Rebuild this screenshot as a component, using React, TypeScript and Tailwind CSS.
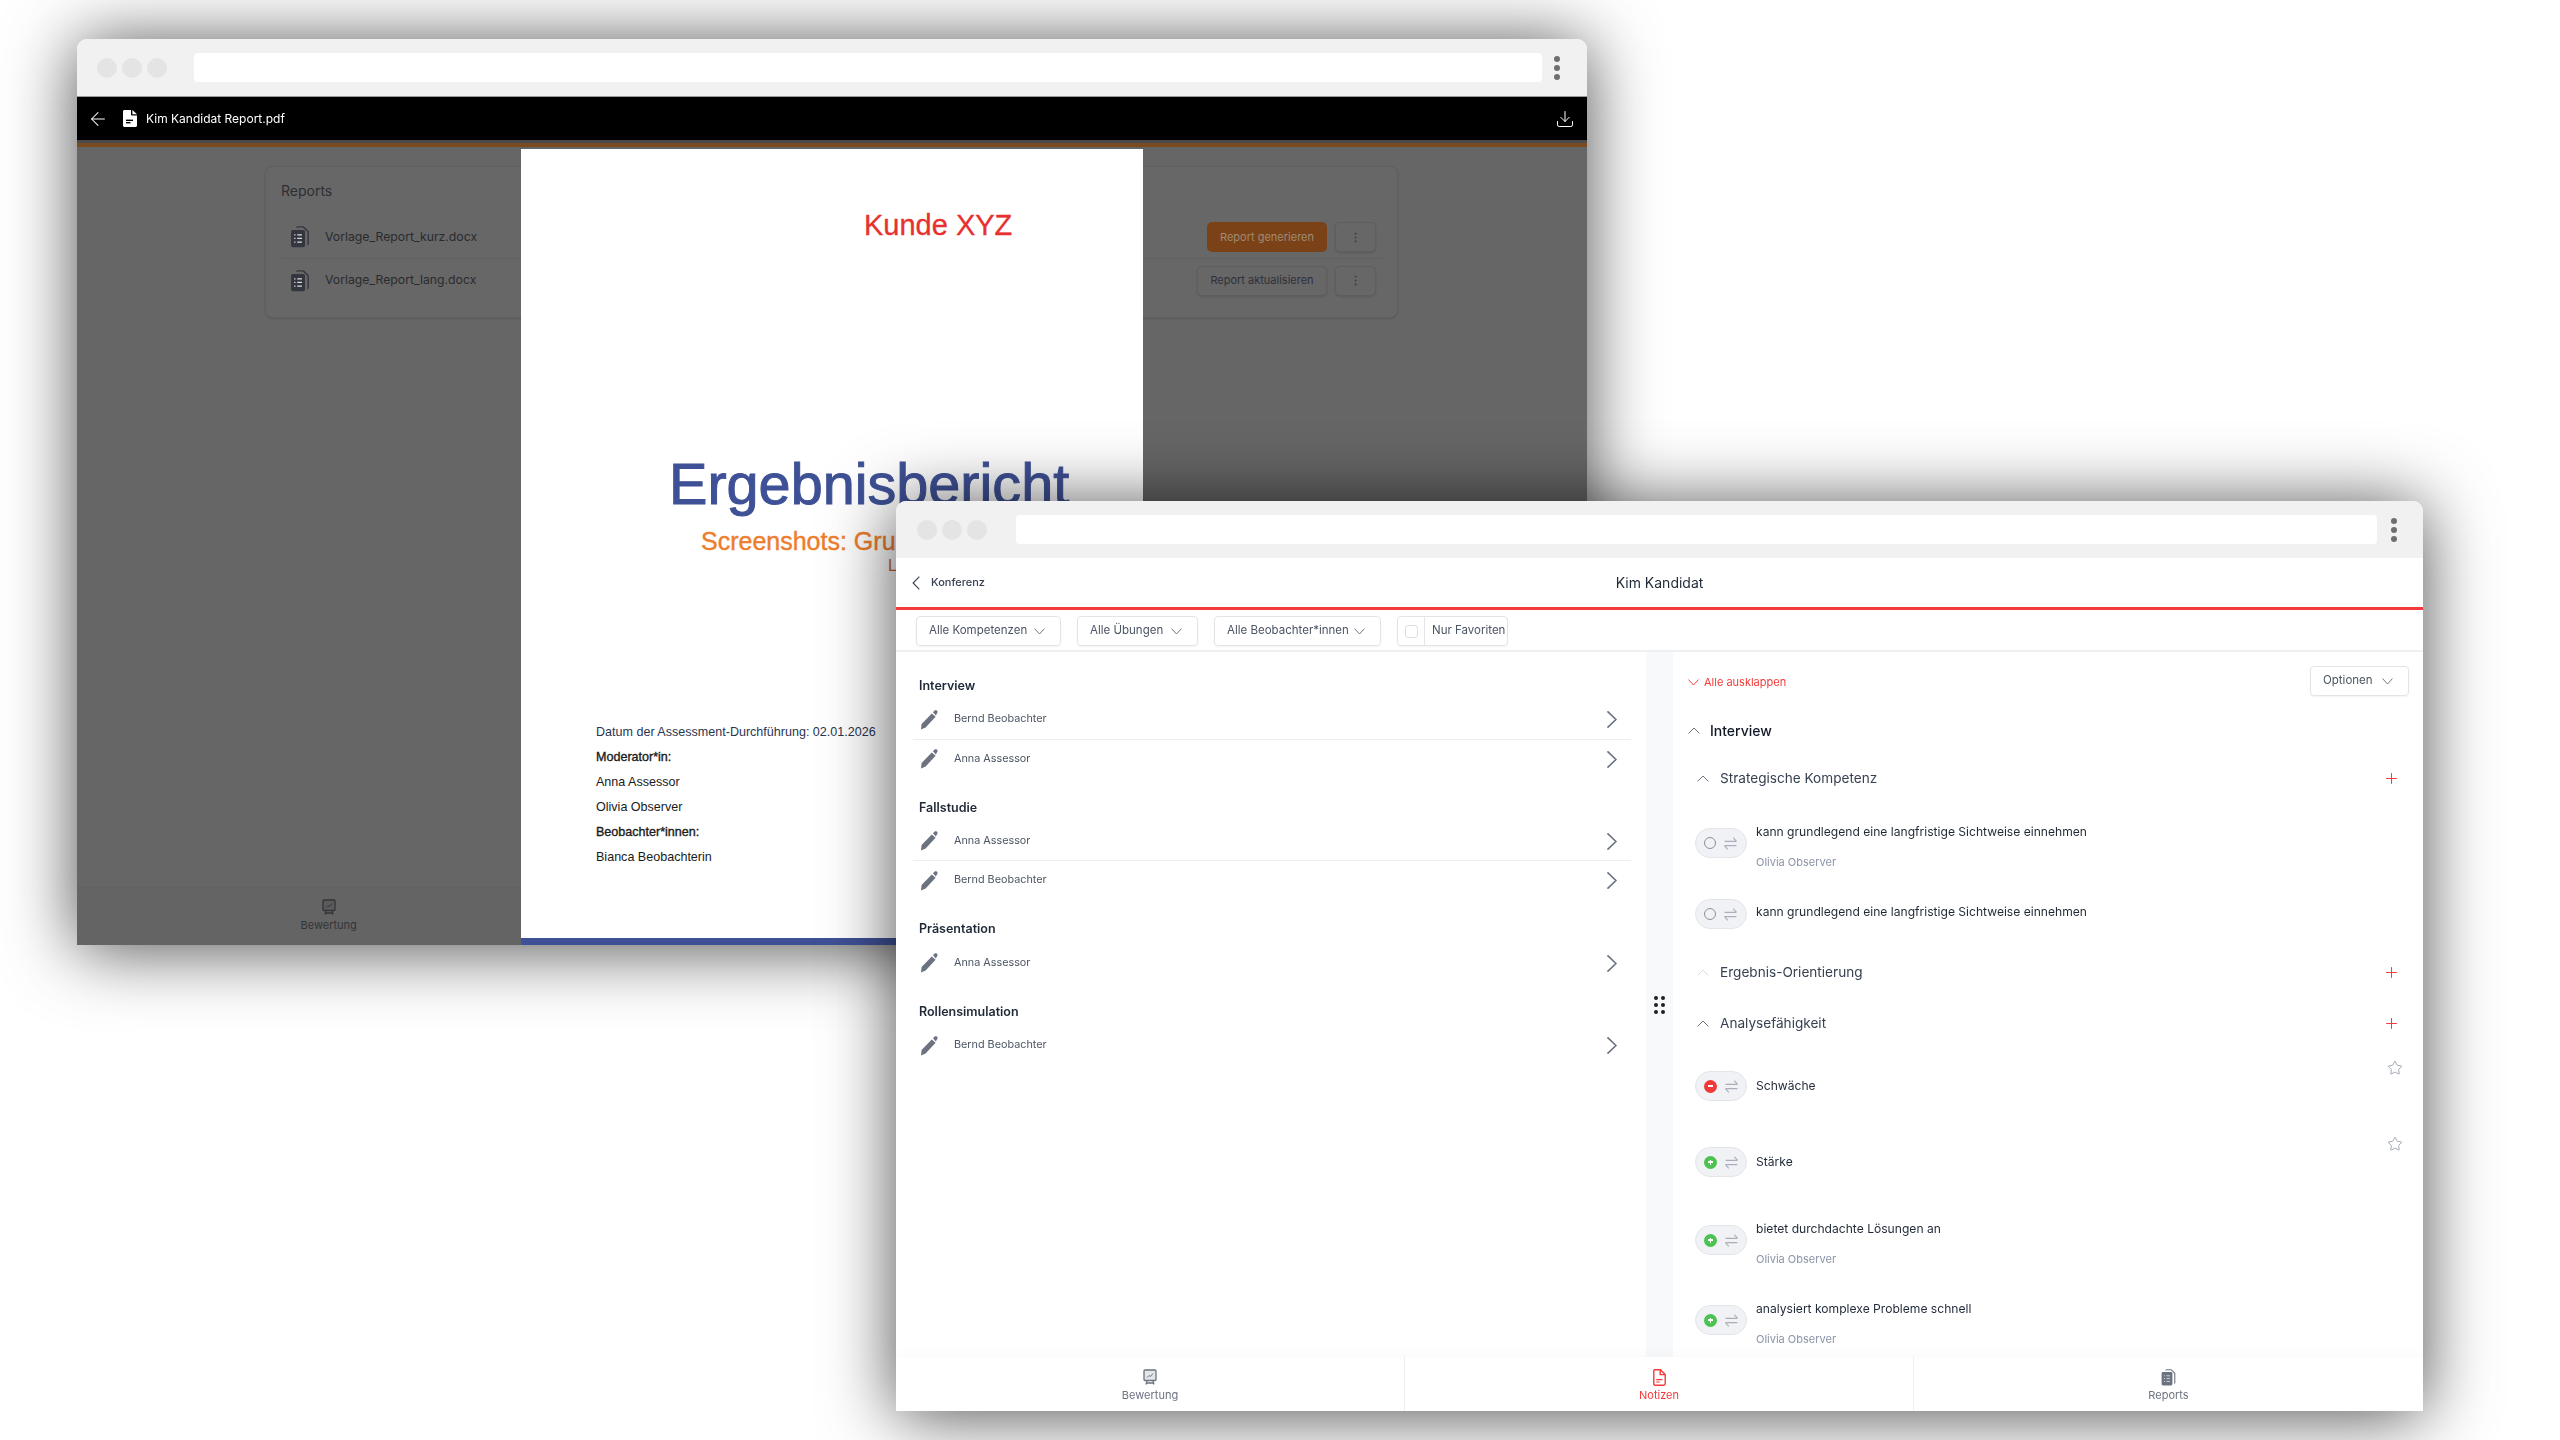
import { Plus, Star, ArrowLeft, Download, EllipsisVertical } from "lucide-react";

function Chevron({ className }: { className: string }) {
  return (
    <svg viewBox="0 0 12 7" fill="none" stroke="currentColor" strokeWidth="1" preserveAspectRatio="none" className={className}>
      <path d="M.6 6.4 6 1l5.4 5.4" />
    </svg>
  );
}

function Kebab({ className }: { className: string }) {
  return (
    <div className={`flex flex-col justify-between ${className}`}>
      <span className="block size-[6px] rounded-full bg-[#6f6f6f]" />
      <span className="block size-[6px] rounded-full bg-[#6f6f6f]" />
      <span className="block size-[6px] rounded-full bg-[#6f6f6f]" />
    </div>
  );
}

function BrowserChrome({ lights, bar, dots }: { lights: string; bar: string; dots: string }) {
  return (
    <div className="flex h-[57px] shrink-0 items-center bg-[#f1f1f1]">
      <div className={`flex gap-[5px] ${lights}`}>
        <span className="block size-[20px] rounded-full bg-[#e4e4e4]" />
        <span className="block size-[20px] rounded-full bg-[#e4e4e4]" />
        <span className="block size-[20px] rounded-full bg-[#e4e4e4]" />
      </div>
      <div className={`h-[29px] rounded-[4px] bg-white ${bar}`} />
      <Kebab className={`h-[24px] ${dots}`} />
    </div>
  );
}

function PencilIcon() {
  return (
    <svg viewBox="0 0 21 20" className="h-[20px] w-[21px] shrink-0" fill="#6b7280">
      <path d="M1 19.6 1.6 14 11.8 3.4 15.6 6.8 5.6 17.6Z" />
      <path d="M13 2.2 14.6.6c.6-.6 1.6-.6 2.2 0l.4.4c.6.6.6 1.5 0 2.1L15.8 5.4Z" />
    </svg>
  );
}

function BoardIcon({ className }: { className: string }) {
  return (
    <svg viewBox="0 0 14 16" fill="none" stroke="currentColor" strokeWidth="1.3" className={className}>
      <rect x="1" y="1" width="12" height="10.5" rx="1" fill="currentColor" fillOpacity=".18" />
      <path d="m4 8.5 2-2 1.5 1L10 4.5" strokeWidth="1" />
      <path d="M4 12 3 15.5M10 12l1 3.5M3.4 14h7.2" />
    </svg>
  );
}

function NoteIcon() {
  return (
    <svg viewBox="0 0 13 17" fill="none" stroke="#f43a3a" strokeWidth="1.4" className="h-[17px] w-[13px]">
      <path d="M1.8.8h5.6l4.8 4.8v9c0 .9-.7 1.6-1.6 1.6H1.8c-.6 0-1-.5-1-1.1V1.8c0-.6.4-1 1-1Z" />
      <path d="M7.2 1v4.6h4.8" />
      <path d="M3.2 10.6h6.2M3.2 13h3.6" strokeWidth="1.1" />
    </svg>
  );
}

function ReportsIcon({ color, className }: { color: string; className: string }) {
  return (
    <svg viewBox="0 0 15 17" fill="none" className={className}>
      <path d="M5 1.4c0-.4.3-.7.7-.7h4.4l3.7 3.6v9.2c0 .5-.3.8-.7.8" stroke={color} strokeWidth="1.1" />
      <rect x=".6" y="3" width="10.8" height="13.4" rx="1.4" fill={color} />
      <path d="M3 6.8h1M5.4 6.8H9M3 9.6h1M5.4 9.6H9M3 12.4h1M5.4 12.4H9" stroke="#d9dbe0" strokeWidth=".9" />
    </svg>
  );
}

function PdfWindow() {
  return (
    <div className="absolute left-[77px] top-[39px] flex h-[906px] w-[1510px] flex-col overflow-hidden rounded-t-[10px] shadow-[0_4px_70px_rgba(0,0,0,0.7)] blur-[0.5px]">
      <BrowserChrome lights="ml-[20px]" bar="ml-[27px] w-[1348px]" dots="ml-[12px]" />
      <div className="flex h-[44px] shrink-0 items-center border-t border-[#9a9a9a] bg-black pl-[10px] pr-[12px] text-white">
        <ArrowLeft size={22} strokeWidth={1.1} />
        <svg viewBox="0 0 14 17" className="ml-[14px] h-[17px] w-[14px]" fill="#fff">
          <path d="M1.5 0H8v4.6c0 .5.4.9.9.9H14v10c0 .8-.7 1.5-1.5 1.5h-11C.7 17 0 16.3 0 15.5v-14C0 .7.7 0 1.5 0Z" />
          <path d="M9.4 0 14 4.2H9.4Z" />
          <rect x="3" y="9.6" width="7" height="1.4" fill="#000" />
          <rect x="3" y="12" width="4.5" height="1.4" fill="#000" />
        </svg>
        <span className="ml-[9px] font-['Inter',sans-serif] text-[12px] leading-none">Kim Kandidat Report.pdf</span>
        <Download size={20} strokeWidth={1.2} className="ml-auto" />
      </div>
      <div className="h-[3px] shrink-0 bg-[#4a4a4a]" />
      <div className="h-[4px] shrink-0 bg-[#7a4a20]" />

      <div className="relative flex min-h-0 flex-1 flex-col bg-[#666666] font-['Inter',sans-serif]">
        <div className="flex-1 pl-[188px] pt-[19px]">
          <div className="flex h-[152px] w-[1133px] flex-col rounded-[8px] border border-[#606060] bg-[#676767] px-[15px] pt-[14px] shadow-[0_1px_2px_rgba(0,0,0,0.12)]">
            <div className="text-[14px] leading-[20px] text-[#2e2f33]">Reports</div>
            <ReportRow name="Vorlage_Report_kurz.docx" primary label="Report generieren" />
            <ReportRow name="Vorlage_Report_lang.docx" label="Report aktualisieren" last />
          </div>
        </div>
        <div className="grid h-[58px] shrink-0 grid-cols-3 border-t border-[#626262] bg-[#646464]">
          <div className="flex flex-col items-center pt-[11px] text-[#333438]">
            <BoardIcon className="h-[16px] w-[14px]" />
            <span className="mt-[2px] text-[11px] leading-[16px]">Bewertung</span>
          </div>
        </div>

        {/* pdf page over the dimmed app */}
        <div className="absolute bottom-0 left-[444px] top-[2px] w-[622px] overflow-hidden bg-white font-['Liberation_Sans',sans-serif]">
          <div className="flex h-[789px] flex-col">
            <div className="mt-[59px] pl-[343px] text-[29px] leading-[34px] text-[#e8302f] [-webkit-text-stroke:0.3px_#e8302f]">Kunde XYZ</div>
            <div className="mt-[209px] whitespace-nowrap pl-[148px] text-[57.6px] leading-[66px] text-[#3f5196] [-webkit-text-stroke:1px_#3f5196]">Ergebnisbericht</div>
            <div className="whitespace-nowrap pl-[180px] pt-[9px] text-[25px] leading-[30px] text-[#ee7d2c] [-webkit-text-stroke:0.4px_#ee7d2c]">Screenshots: Gruppenübung</div>
            <div className="whitespace-nowrap pl-[367px] pt-[0px] text-[16px] leading-[20px] text-[#c8692b]">L</div>
            <div className="mt-[144px] flex flex-col pl-[75px] text-[12.55px] leading-[25px] text-[#1a1a1a]">
              <span className="text-[#2a3550]">Datum der Assessment-Durchführung: 02.01.2026</span>
              <span className="[-webkit-text-stroke:0.35px_#1a1a1a]">Moderator*in:</span>
              <span>Anna Assessor</span>
              <span>Olivia Observer</span>
              <span className="[-webkit-text-stroke:0.35px_#1a1a1a]">Beobachter*innen:</span>
              <span>Bianca Beobachterin</span>
            </div>
          </div>
          <div className="h-[7px] bg-[#3f5196]" />
        </div>
      </div>
    </div>
  );
}

function ReportRow({ name, label, primary, last }: { name: string; label: string; primary?: boolean; last?: boolean }) {
  return (
    <div className={`flex h-[43px] items-center ${last ? "" : "mt-[15px] border-b border-[#606060]"}`}>
      <ReportsIcon color="#33363f" className="ml-[9px] h-[22px] w-[20px]" />
      <span className="ml-[15px] text-[12.25px] text-[#2a2b2f]">{name}</span>
      <div
        className={`ml-auto flex h-[30px] items-center justify-center rounded-[5px] text-[11px] ${
          primary
            ? "w-[120px] bg-[#7a4216] text-[#a08a75]"
            : "w-[130px] border border-[#5e5e5e] bg-[#676767] text-[#2e303a] shadow-[0_1px_2px_rgba(0,0,0,0.12)]"
        }`}
      >
        {label}
      </div>
      <div className="ml-[8px] mr-[6px] flex h-[30px] w-[41px] items-center justify-center rounded-[5px] border border-[#5e5e5e] bg-[#676767] shadow-[0_1px_2px_rgba(0,0,0,0.12)]">
        <EllipsisVertical size={13} strokeWidth={1.5} className="text-[#3a3a44]" />
      </div>
    </div>
  );
}

function FilterButton({ label, className }: { label: string; className: string }) {
  return (
    <div className={`flex h-[30px] items-center justify-between rounded-[4px] border border-[#e2e4e8] pl-[12px] pr-[15px] text-[11.5px] text-[#4b5563] shadow-[0_1px_2px_rgba(0,0,0,0.05)] ${className}`}>
      <span>{label}</span>
      <Chevron className="h-[7px] w-[11px] rotate-180 text-[#6b7280]" />
    </div>
  );
}

const exercises = [
  { title: "Interview", names: ["Bernd Beobachter", "Anna Assessor"] },
  { title: "Fallstudie", names: ["Anna Assessor", "Bernd Beobachter"] },
  { title: "Präsentation", names: ["Anna Assessor"] },
  { title: "Rollensimulation", names: ["Bernd Beobachter"] },
];

function ExercisePanel() {
  return (
    <div className="flex w-[750px] flex-col gap-[19px] pl-[17px] pr-[15px] pt-[24px]">
      {exercises.map((ex) => (
        <div key={ex.title}>
          <div className="mb-[4.5px] pl-[6px] text-[12.5px] font-semibold leading-[20px] text-[#1f2937]">{ex.title}</div>
          {ex.names.map((name, i) => (
            <div
              key={name}
              className={`flex h-[39px] items-center pl-[7px] pr-[10px] ${i < ex.names.length - 1 ? "border-b border-[#eceef1]" : ""}`}
            >
              <PencilIcon />
              <span className="ml-[13px] text-[10.8px] text-[#4b5563]">{name}</span>
              <Chevron className="ml-auto h-[11px] w-[18px] rotate-90 text-[#6b7280]" />
            </div>
          ))}
        </div>
      ))}
    </div>
  );
}

function SwapIcon() {
  return (
    <svg viewBox="0 0 14 14" fill="none" stroke="#a9aeba" strokeWidth="1" className="h-[15px] w-[15px]">
      <path d="M1.5 5h11M9.5 1.5l3.2 3.5M12.5 9h-11M4.5 12.5 1.3 9" />
    </svg>
  );
}

function Dot({ state }: { state: "none" | "plus" | "minus" }) {
  if (state === "none") return <span className="block size-[12px] rounded-full border-[1.5px] border-[#8b909c]" />;
  return (
    <span className={`flex size-[13px] items-center justify-center rounded-full ${state === "minus" ? "bg-[#f03a3a]" : "bg-[#4cc24f]"}`}>
      <span className={`block h-[1.5px] w-[5px] bg-white ${state === "plus" ? "relative after:absolute after:-top-[1.75px] after:left-[1.75px] after:h-[5px] after:w-[1.5px] after:bg-white" : ""}`} />
    </span>
  );
}

function Note({ text, author, state, star, className }: { text: string; author?: string; state: "none" | "plus" | "minus"; star?: boolean; className: string }) {
  return (
    <div className={`flex pl-[22px] ${className}`}>
      <div className={`flex h-[30px] w-[52px] shrink-0 items-center gap-[7px] rounded-full border border-[#e3e5e9] bg-[#f1f2f5] pl-[8px] ${star ? "" : "mt-[5px]"}`}>
        <Dot state={state} />
        <SwapIcon />
      </div>
      <div className={`ml-[9px] flex flex-col ${star ? "pt-[6px]" : author ? "" : "pt-[9px]"}`}>
        <span className="text-[12.1px] leading-[18px] text-[#1f2937]">{text}</span>
        {author && <span className="mt-[12px] text-[11px] leading-[18px] text-[#8b93a7]">{author}</span>}
      </div>
      {star && <Star size={16} strokeWidth={1.2} className="ml-auto -mr-[3px] -mt-[11px] text-[#8b93a7]" />}
    </div>
  );
}

function Competency({ title, faded, className }: { title: string; faded?: boolean; className: string }) {
  return (
    <div className={`flex h-[20px] items-center pl-[10px] ${className}`}>
      <Chevron className={`h-[7px] w-[12px] ${faded ? "text-[#d9dce1]" : "text-[#6b7280]"}`} />
      <span className="ml-[11px] text-[13.6px] text-[#374151]">{title}</span>
      <Plus size={17} strokeWidth={1.4} className="ml-auto text-[#f43a3a]" />
    </div>
  );
}

function NotesPanel() {
  return (
    <div className="flex min-w-0 flex-1 flex-col pl-[14px] pr-[23px] pt-[14px]">
      <div className="-mr-[9px] flex h-[30px] items-center justify-between">
        <div className="flex items-center pl-[1px] pt-[2px] text-[11px] text-[#f43a3a]">
          <Chevron className="h-[7px] w-[11px] rotate-180" />
          <span className="ml-[5px]">Alle ausklappen</span>
        </div>
        <FilterButton label="Optionen" className="w-[99px]" />
      </div>
      <div className="mt-[24px] flex h-[20px] items-center pl-[1px]">
        <Chevron className="h-[7px] w-[12px] text-[#6b7280]" />
        <span className="ml-[10px] text-[14px] font-medium text-[#111827]">Interview</span>
      </div>
      <Competency title="Strategische Kompetenz" className="mt-[28px]" />
      <Note className="mt-[35px] -ml-[14px]" text="kann grundlegend eine langfristige Sichtweise einnehmen" author="Olivia Observer" state="none" />
      <Note className="mt-[23px] -ml-[14px]" text="kann grundlegend eine langfristige Sichtweise einnehmen" state="none" />
      <Competency title="Ergebnis-Orientierung" faded className="mt-[33px]" />
      <Competency title="Analysefähigkeit" className="mt-[31px]" />
      <Note className="mt-[38px] -ml-[14px]" text="Schwäche" state="minus" star />
      <Note className="mt-[46px] -ml-[14px]" text="Stärke" state="plus" star />
      <Note className="mt-[43px] -ml-[14px]" text="bietet durchdachte Lösungen an" author="Olivia Observer" state="plus" />
      <Note className="mt-[32px] -ml-[14px]" text="analysiert komplexe Probleme schnell" author="Olivia Observer" state="plus" />
    </div>
  );
}

function ConferenceWindow() {
  return (
    <div className="absolute left-[896px] top-[501px] flex h-[910px] w-[1527px] flex-col overflow-hidden rounded-t-[10px] bg-white font-['Inter',sans-serif] shadow-[0_4px_70px_rgba(0,0,0,0.7)] blur-[0.5px]">
      <BrowserChrome lights="ml-[21px]" bar="ml-[29px] w-[1361px]" dots="ml-[14px]" />
      <div className="relative flex h-[49px] shrink-0 items-center justify-center">
        <div className="absolute left-[13px] flex items-center">
          <Chevron className="h-[8px] w-[14px] -rotate-90 text-[#374151]" />
          <span className="ml-[8px] text-[11px] font-medium text-[#374151]">Konferenz</span>
        </div>
        <span className="text-[14px] text-[#1f2937]">Kim Kandidat</span>
      </div>
      <div className="h-[3px] shrink-0 bg-[#f43a3a]" />
      <div className="flex h-[42px] shrink-0 gap-[16px] border-b-2 border-[#eff0f2] pl-[20px] pt-[6px]">
        <FilterButton label="Alle Kompetenzen" className="w-[145px]" />
        <FilterButton label="Alle Übungen" className="w-[121px]" />
        <FilterButton label="Alle Beobachter*innen" className="w-[167px]" />
        <div className="flex h-[30px] w-[111px] items-center rounded-[4px] border border-[#e2e4e8] text-[11.5px] text-[#4b5563] shadow-[0_1px_2px_rgba(0,0,0,0.05)]">
          <div className="flex h-full w-[27px] items-center justify-center border-r border-[#e2e4e8]">
            <span className="block size-[13px] rounded-[3px] border border-[#dcdfe4]" />
          </div>
          <span className="ml-[7px]">Nur Favoriten</span>
        </div>
      </div>
      <div className="flex min-h-0 flex-1 overflow-hidden">
        <ExercisePanel />
        <div className="flex w-[27px] shrink-0 items-center justify-center bg-[#f8f9fb]">
          <div className="grid grid-cols-2 gap-[3px]">
            {[0, 1, 2, 3, 4, 5].map((i) => (
              <span key={i} className="block size-[4px] rounded-full bg-[#1f2024]" />
            ))}
          </div>
        </div>
        <NotesPanel />
      </div>
      <div className="grid h-[54px] shrink-0 grid-cols-3 divide-x divide-[#eeeff1] bg-white shadow-[0_-4px_10px_rgba(0,0,0,0.025)]">
        <div className="flex flex-col items-center pt-[12px] text-[#6b7280]">
          <BoardIcon className="h-[16px] w-[14px]" />
          <span className="mt-[2px] text-[11px] leading-[16px]">Bewertung</span>
        </div>
        <div className="flex flex-col items-center pt-[12px] text-[#f43a3a]">
          <NoteIcon />
          <span className="mt-[1px] text-[11px] leading-[16px]">Notizen</span>
        </div>
        <div className="flex flex-col items-center pt-[12px] text-[#6b7280]">
          <ReportsIcon color="#6b7280" className="h-[17px] w-[15px]" />
          <span className="mt-[1px] text-[11px] leading-[16px]">Reports</span>
        </div>
      </div>
    </div>
  );
}

export default function App() {
  return (
    <div className="relative h-[1440px] w-[2560px] overflow-hidden bg-white">
      <PdfWindow />
      <ConferenceWindow />
    </div>
  );
}
